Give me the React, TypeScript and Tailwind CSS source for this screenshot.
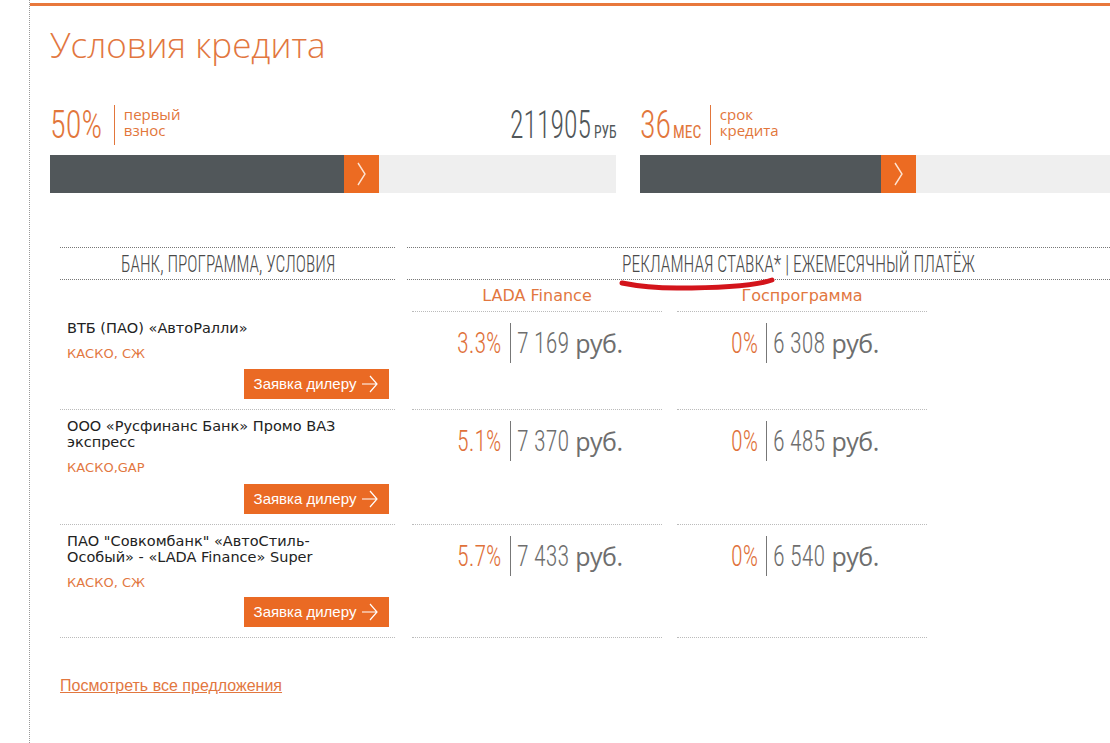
import React, { useLayoutEffect, useRef, useState } from "react";

const cond = "font-['Roboto_Condensed','Liberation_Sans_Narrow',sans-serif] font-light";

// Narrow squeezes a condensed run of text horizontally and keeps its layout width in step.
function Narrow({ children, className, s = 0.75 }: { children: React.ReactNode; className?: string; s?: number }) {
  const inner = useRef<HTMLSpanElement>(null);
  const [w, setW] = useState<number | undefined>();
  useLayoutEffect(() => {
    if (inner.current) setW(inner.current.offsetWidth * s);
  }, [s, children]);
  return (
    <span className="inline-block shrink-0 overflow-visible whitespace-nowrap" style={{ width: w }}>
      <span ref={inner} className={`inline-block origin-left ${className ?? ""}`} style={{ transform: `scaleX(${s})` }}>
        {children}
      </span>
    </span>
  );
}

type Offer = {
  name: string;
  tags: string;
  lada: [string, string];
  gos: [string, string];
  h: string;
};

const offers: Offer[] = [
  { name: "ВТБ (ПАО) «АвтоРалли»", tags: "КАСКО, СЖ", lada: ["3.3%", "7 169"], gos: ["0%", "6 308"], h: "h-[98px]" },
  { name: "ООО «Русфинанс Банк» Промо ВАЗ экспресс", tags: "КАСКО,GAP", lada: ["5.1%", "7 370"], gos: ["0%", "6 485"], h: "h-[115px]" },
  {
    name: "ПАО \"Совкомбанк\" «АвтоСтиль-Особый» - «LADA Finance» Super",
    tags: "КАСКО, СЖ",
    lada: ["5.7%", "7 433"],
    gos: ["0%", "6 540"],
    h: "h-[113px]",
  },
];

function Slider({ fill }: { fill: string }) {
  return (
    <div className="flex h-[38px] w-[566px] bg-[#efefef]">
      <div className={`${fill} bg-[#51575a]`} />
      <div className="flex w-[35px] items-center justify-center bg-[#ec6b22]">
        <svg width="12" height="26" viewBox="0 0 12 26" fill="none">
          <path d="M2 2 L9 13 L2 24" stroke="#fde3d2" strokeWidth="1.4" />
        </svg>
      </div>
    </div>
  );
}

function Caption({ a, b }: { a: string; b: string }) {
  return (
    <div className="-mt-[6px] flex flex-col font-['Open_Sans',sans-serif] text-[15px] leading-[16px] text-[#e2763b]">
      <span>{a}</span>
      <span>{b}</span>
    </div>
  );
}

function Rate({ v }: { v: [string, string] }) {
  return (
    <div className="flex h-[40px] items-center justify-center pl-[6px]">
      <Narrow s={0.8} className={`${cond} text-[30px] leading-[36px] text-[#e0713a]`}>{v[0]}</Narrow>
      <span className="ml-[8px] mr-[6px] h-[40px] w-px bg-[#777]" />
      <Narrow s={0.8} className={`${cond} text-[30px] leading-[36px] text-[#6e6e6e]`}>{v[1]}</Narrow>
      <span className="ml-[6px] font-['Open_Sans',sans-serif] text-[25px] leading-[36px] tracking-[-0.5px] text-[#6e6e6e]">
        руб.
      </span>
    </div>
  );
}

export default function App() {
  return (
    <div className="h-[743px] w-[1110px] overflow-hidden bg-white">
      <div className="ml-[29px] h-[743px] border-l border-dotted border-[#999] pt-[3px]">
        <div className="h-[3px] bg-[#e8783c]" />
        <div className="pl-[20px]">
          <h1 className="mt-[19px] font-['Open_Sans',sans-serif] text-[35px] font-light leading-[40px] text-[#e2773f]">
            Условия кредита
          </h1>

          <div className="mt-[38px] flex gap-[24px] whitespace-nowrap">
            <div className="w-[566px]">
              <div className="flex h-[44px] items-center">
                <Narrow s={0.85} className={`${cond} text-[38px] leading-[44px] text-[#e2763b]`}>50%</Narrow>
                <span className="ml-[12px] mr-[9px] h-[40px] w-px bg-[#e2763b]" />
                <Caption a="первый" b="взнос" />
                <span className="ml-auto flex items-baseline">
                  <Narrow s={0.73} className={`${cond} text-[38px] leading-[44px] text-[#51575a]`}>211905</Narrow>
                  <span className="ml-[3px]">
                    <Narrow s={0.72} className={`${cond} font-normal text-[19px] text-[#51575a]`}>РУБ</Narrow>
                  </span>
                </span>
              </div>
              <div className="mt-[8px]">
                <Slider fill="w-[294px]" />
              </div>
            </div>
            <div className="w-[566px]">
              <div className="flex h-[44px] items-center">
                <span className="flex items-baseline">
                  <Narrow s={0.84} className={`${cond} text-[38px] leading-[44px] text-[#e2763b]`}>36</Narrow>
                  <span className="ml-[2px]">
                    <Narrow s={0.82} className={`${cond} font-normal text-[19px] text-[#e2763b]`}>МЕС</Narrow>
                  </span>
                </span>
                <span className="ml-[8px] mr-[9px] h-[40px] w-px bg-[#e2763b]" />
                <Caption a="срок" b="кредита" />
              </div>
              <div className="mt-[8px]">
                <Slider fill="w-[241px]" />
              </div>
            </div>
          </div>

          <div className="relative ml-[10px] mt-[54px]">
            <div className="flex h-[33px]">
              <div className="flex w-[335px] shrink-0 items-center justify-center border-y border-dotted border-[#777]">
                <Narrow s={0.72} className={`${cond} text-[24px] text-[#4a4a4a]`}>
                  БАНК, ПРОГРАММА, УСЛОВИЯ
                </Narrow>
              </div>
              <div className="ml-[12px] flex min-w-0 flex-1 items-center border-y border-dotted border-[#777] pl-[215px]">
                <Narrow s={0.73} className={`${cond} text-[24px] text-[#4a4a4a]`}>
                  РЕКЛАМНАЯ СТАВКА* | ЕЖЕМЕСЯЧНЫЙ ПЛАТЁЖ
                </Narrow>
              </div>
            </div>

            <div className="flex h-[32px]">
              <div className="w-[335px] shrink-0" />
              <div className="ml-[17px] flex w-[250px] items-center justify-center border-b border-dotted border-[#bbb] font-['DejaVu_Sans',sans-serif] text-[16px] text-[#e2773f]">
                LADA Finance
              </div>
              <div className="ml-[15px] flex w-[250px] items-center justify-center border-b border-dotted border-[#bbb] font-['DejaVu_Sans',sans-serif] text-[16px] text-[#e2773f]">
                Госпрограмма
              </div>
            </div>

            {offers.map((o) => (
              <div key={o.name} className={`flex ${o.h}`}>
                <div className="flex w-[335px] shrink-0 flex-col border-b border-dotted border-[#bbb] pl-[7px] pr-[6px] pt-[8px]">
                  <div className="max-w-[280px] font-['DejaVu_Sans',sans-serif] text-[14.5px] leading-[16px] text-[#222]">
                    {o.name}
                  </div>
                  <div className="mt-[10px] font-['DejaVu_Sans',sans-serif] text-[13px] leading-[16px] text-[#e2773f]">
                    {o.tags}
                  </div>
                  <div className="mb-[10px] mt-auto flex justify-end">
                    <button className="flex h-[30px] w-[145px] items-center justify-center gap-[4px] bg-[#ea6a24] pl-[1px] font-['Liberation_Sans',sans-serif] text-[15px] text-white">
                      Заявка дилеру
                      <svg width="20" height="20" viewBox="0 0 20 20" fill="none">
                        <path d="M2 10 H17 M10 2 L17 10 L10 18" stroke="white" strokeWidth="1.2" />
                      </svg>
                    </button>
                  </div>
                </div>
                <div className="ml-[17px] w-[250px] border-b border-dotted border-[#bbb] pt-[11px]">
                  <Rate v={o.lada} />
                </div>
                <div className="ml-[15px] w-[250px] border-b border-dotted border-[#bbb] pt-[11px]">
                  <Rate v={o.gos} />
                </div>
              </div>
            ))}

            <svg className="absolute left-[557px] top-[29px]" width="164" height="16" viewBox="0 0 164 16" fill="none">
              <path
                d="M5 7 C20 10 35 12 60 12 C95 12 135 11 155 4"
                stroke="#d3141b"
                strokeWidth="5"
                strokeLinecap="round"
              />
            </svg>
          </div>

          <a
            href="#"
            className="ml-[10px] mt-[36px] inline-block font-['Liberation_Sans',sans-serif] text-[16px] text-[#e2773f] underline"
          >
            Посмотреть все предложения
          </a>
        </div>
      </div>
    </div>
  );
}
